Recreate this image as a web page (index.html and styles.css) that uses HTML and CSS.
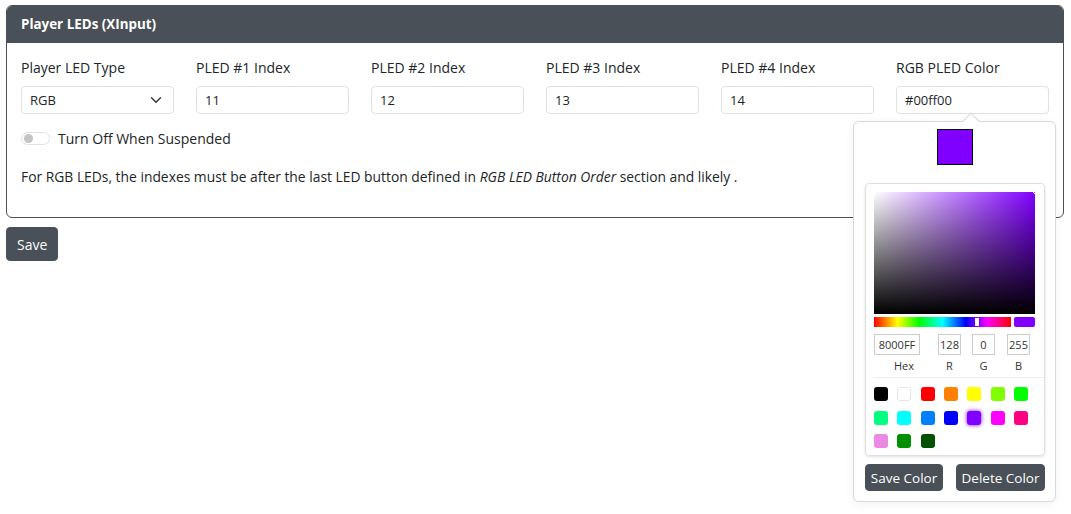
FILE: index.html
```html
<!DOCTYPE html>
<html>
<head>
<meta charset="utf-8">
<link rel="stylesheet" href="styles.css">
</head>
<body>
<div class="page">
  <section class="card">
    <div class="card-header">Player LEDs (XInput)</div>
    <div class="card-body">
      <div class="fields">
        <div class="field">
          <label class="label">Player LED Type</label>
          <div class="select">RGB
            <svg class="chev" width="12" height="12" viewBox="0 0 16 16"><path d="M2 5l6 6 6-6" fill="none" stroke="#343a40" stroke-width="2" stroke-linecap="round" stroke-linejoin="round"/></svg>
          </div>
        </div>
        <div class="field">
          <label class="label">PLED #1 Index</label>
          <div class="input">11</div>
        </div>
        <div class="field">
          <label class="label">PLED #2 Index</label>
          <div class="input">12</div>
        </div>
        <div class="field">
          <label class="label">PLED #3 Index</label>
          <div class="input">13</div>
        </div>
        <div class="field">
          <label class="label">PLED #4 Index</label>
          <div class="input">14</div>
        </div>
        <div class="field picker-anchor">
          <label class="label">RGB PLED Color</label>
          <div class="input">#00ff00</div>
          <div class="popover">
            <div class="arrow"></div>
            <div class="preview"></div>
            <div class="sketch">
              <div class="saturation"><span class="sat-ptr"></span></div>
              <div class="hue-row">
                <div class="hue"><span class="hue-ptr"></span></div>
                <div class="active"></div>
              </div>
              <div class="inputs">
                <div class="in-group hex"><div class="in-box">8000FF</div><span>Hex</span></div>
                <div class="in-group"><div class="in-box">128</div><span>R</span></div>
                <div class="in-group"><div class="in-box">0</div><span>G</span></div>
                <div class="in-group"><div class="in-box">255</div><span>B</span></div>
              </div>
              <div class="swatches">
                <span class="sw" style="background:#000000"></span>
                <span class="sw white" style="background:#ffffff"></span>
                <span class="sw" style="background:#ff0000"></span>
                <span class="sw" style="background:#ff8000"></span>
                <span class="sw" style="background:#ffff00"></span>
                <span class="sw" style="background:#80ff00"></span>
                <span class="sw" style="background:#00ff00"></span>
                <span class="sw" style="background:#00ff80"></span>
                <span class="sw" style="background:#00ffff"></span>
                <span class="sw" style="background:#0080ff"></span>
                <span class="sw" style="background:#0000ff"></span>
                <span class="sw selected" style="background:#8000ff"></span>
                <span class="sw" style="background:#ff00ff"></span>
                <span class="sw" style="background:#ff0080"></span>
                <span class="sw" style="background:#ea8ae2"></span>
                <span class="sw" style="background:#008f00"></span>
                <span class="sw" style="background:#005200"></span>
              </div>
            </div>
            <div class="pop-actions">
              <button class="btn btn-save-color">Save Color</button>
              <button class="btn btn-delete-color">Delete Color</button>
            </div>
          </div>
        </div>
      </div>
      <div class="switch-row">
        <span class="switch"><span class="knob"></span></span>
        <span>Turn Off When Suspended</span>
      </div>
      <p class="note">For RGB LEDs, the indexes must be after the last LED button defined in <em>RGB LED Button Order</em> section and likely .</p>
    </div>
  </section>
  <div class="actions">
    <button class="btn save">Save</button>
  </div>
</div>
</body>
</html>
```

FILE: styles.css
```css
* { box-sizing: border-box; }
html, body { margin: 0; padding: 0; background: #fff; }
body {
  font-family: "Open Sans", "Noto Sans", sans-serif;
  font-size: 14px;
  color: #212529;
}
.page { padding: 5px 7px 0 6px; min-height: 514px; }
.card {
  border: 1px solid #495057;
  border-radius: 6px;
}
.card-header {
  background: #495057;
  color: #fff;
  font-weight: 700;
  font-size: 13.4px;
  height: 37px;
  line-height: 36px;
  padding: 0 14px;
  border-radius: 5px 5px 0 0;
}
.card-body { padding: 15px 14px 14px 14px; }
.fields {
  display: grid;
  grid-template-columns: repeat(6, 153px);
  column-gap: 22px;
}
.field { display: flex; flex-direction: column; }
.label { height: 28px; line-height: 20px; font-size: 14px; display: block; }
.input, .select {
  height: 28px;
  border: 1px solid #dee2e6;
  border-radius: 4px;
  padding: 0 9px 0 8px;
  line-height: 26px;
  font-size: 13px;
  display: flex;
  align-items: center;
  justify-content: space-between;
}
.chev { margin-right: 2px; }
.picker-anchor { position: relative; }
.switch-row {
  display: flex;
  align-items: center;
  gap: 8px;
  margin-top: 15px;
  height: 18px;
}
.switch {
  width: 29px;
  height: 13px;
  border: 1px solid #dee2e6;
  border-radius: 7px;
  display: flex;
  align-items: center;
  padding-left: 2px;
}
.knob { width: 9px; height: 9px; border-radius: 50%; background: #c4c4c4; }
.note { margin: 20px 0 16px; line-height: 20px; font-size: 13.85px; }
.actions { margin-top: 9px; }
.btn {
  font-family: inherit;
  font-size: 13.5px;
  color: #fff;
  background: #495057;
  border: 1px solid #495057;
  border-radius: 4px;
  padding: 0 7px;
  height: 27px;
  white-space: nowrap;
  flex: none;
  cursor: pointer;
}
.save { height: 34px; padding: 0 10px; font-size: 14px; }
.btn-save-color { width: 78px; padding: 0; }
.btn-delete-color { width: 89px; padding: 0; }

/* popover */
.popover {
  position: absolute;
  top: 63px;
  left: -43px;
  width: 203px;
  background: #fff;
  border: 1px solid #d9d9d9;
  border-radius: 6px;
  box-shadow: 0 2px 10px rgba(0,0,0,0.06);
  padding: 7px 10px 10px 11px;
  z-index: 2;
}
.arrow {
  position: absolute;
  top: -7px;
  left: 111px;
  width: 12px;
  height: 12px;
  background: #fff;
  border-left: 1px solid #d9d9d9;
  border-top: 1px solid #d9d9d9;
  transform: rotate(45deg);
}
.preview {
  width: 36px;
  height: 36px;
  margin: 0 auto;
  background: #8000ff;
  border: 1px solid #000;
}
.sketch {
  margin-top: 18px;
  border: 1px solid #e0e0e0;
  border-radius: 4px;
  box-shadow: 0 1px 3px rgba(0,0,0,0.12);
  padding: 8px 0 7px;
}
.saturation {
  position: relative;
  margin: 0 9px 0 8px;
  height: 122px;
  background:
    linear-gradient(to top, #000, rgba(0,0,0,0)),
    linear-gradient(to right, #fff, #8000ff);
}
.sat-ptr {
  position: absolute;
  right: -2px;
  top: -2px;
  width: 4px;
  height: 4px;
  border-radius: 50%;
  border: 1px solid #fff;
}
.hue-row {
  display: flex;
  gap: 3px;
  margin: 3px 9px 0 8px;
  height: 10px;
}
.hue {
  flex: 1;
  position: relative;
  background: linear-gradient(to right, #f00 0%, #ff0 17%, #0f0 33%, #0ff 50%, #00f 67%, #f0f 83%, #f00 100%);
}
.hue-ptr {
  position: absolute;
  left: 101px;
  top: 1px;
  width: 4px;
  height: 8px;
  background: #fff;
  box-shadow: 0 0 1px rgba(0,0,0,0.6);
}
.active {
  width: 21px;
  background: #8000ff;
  border-radius: 2px;
}
.inputs {
  display: flex;
  margin: 7px 0 0 8px;
  gap: 0;
  padding-bottom: 4px;
  border-bottom: 1px solid #eee;
}
.in-group {
  display: flex;
  flex-direction: column;
  align-items: center;
  font-size: 11px;
  color: #333;
}
.in-group span { margin-top: 4px; line-height: 14px; }
.in-box {
  height: 21px;
  line-height: 19px;
  border: 1px solid #ccc;
  font-size: 11px;
  color: #333;
  text-align: center;
  width: 23px;
}
.hex .in-box { width: 46px; }
.hex span { padding-left: 14px; }
.in-group:nth-child(2) { margin-left: 18px; }
.in-group:nth-child(3) { margin-left: 11px; }
.in-group:nth-child(4) { margin-left: 12px; }
.swatches {
  display: grid;
  grid-template-columns: repeat(7, 14px);
  column-gap: 9.33px;
  row-gap: 9.5px;
  padding: 9px 8px 0;
}
.sw {
  width: 14px;
  height: 14px;
  border-radius: 3px;
  display: block;
}
.sw.white { border: 1px solid #e5e5e5; }
.sw.selected { box-shadow: 0 0 4px #8000ff; }
.pop-actions {
  display: flex;
  justify-content: space-between;
  margin-top: 8px;
}
```
